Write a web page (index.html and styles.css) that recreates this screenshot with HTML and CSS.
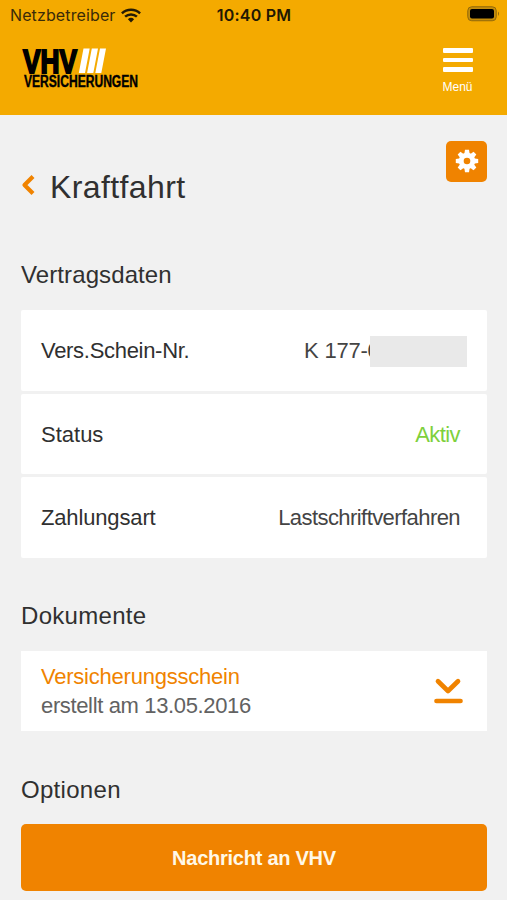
FILE: index.html
```html
<!DOCTYPE html>
<html lang="de">
<head>
<meta charset="utf-8">
<meta name="viewport" content="width=device-width, initial-scale=1">
<title>VHV Versicherungen – Kraftfahrt</title>
<link rel="stylesheet" href="styles.css">
</head>
<body>
<header class="header">
  <div class="status-bar">
    <div class="carrier"><span>Netzbetreiber</span>
      <svg width="20" height="15" viewBox="0 0 20 15" fill="none" stroke="#241b05" stroke-width="2.5"><path d="M.9 5.4a13.3 13.3 0 0 1 18.2 0"/><path d="M4.1 8.7a8.7 8.7 0 0 1 11.8 0"/><path d="M6.9 11.2a4.6 4.6 0 0 1 6.2 0L10 14.5z" fill="#241b05" stroke="none"/></svg>
    </div>
    <time class="clock">10:40 PM</time>
    <svg class="battery" width="33" height="16" viewBox="0 0 33 16"><rect x=".75" y=".75" width="28.5" height="14" rx="4" fill="#c48d0b" stroke="#92690a"/><rect x="3" y="3" width="24" height="9.5" rx="2" fill="#000"/><path d="M31 5.5q2 2.2 0 4.5z" fill="#92690a"/></svg>
  </div>
  <div class="brand-row">
    <svg class="logo" width="120" height="44" viewBox="0 0 120 44" role="img" aria-label="VHV Versicherungen">
      <text class="logo-main" x="2" y="25.5" textLength="54" lengthAdjust="spacingAndGlyphs">VHV</text>
      <path fill="#fff" d="M62.500 1.500h6.200L64 26h-6.200zM70.800 1.500h6.200L72.300 26h-6.200zM79 1.500h6L80.300 26h-6z"/>
      <text class="logo-sub" x="3" y="40.300" textLength="114" lengthAdjust="spacingAndGlyphs">VERSICHERUNGEN</text>
    </svg>
    <button class="menu"><span class="bars"><i></i><i></i><i></i></span><span>Menü</span></button>
  </div>
</header>
<main class="content">
  <div class="title-row">
    <svg width="14" height="22" viewBox="0 0 14 22" fill="none" stroke="#f08300" stroke-width="4.200" stroke-linecap="butt" stroke-linejoin="round"><path d="M12 2.500 3.500 11 12 19.500"/></svg>
    <h1>Kraftfahrt</h1>
    <button class="settings" aria-label="Einstellungen">
      <svg width="24" height="24" viewBox="-12 -12 24 24"><g fill="#fff"><path id="tooth" d="M-2-11.200h4l.8 5h-5.600z"/><use href="#tooth" transform="rotate(45)"/><use href="#tooth" transform="rotate(90)"/><use href="#tooth" transform="rotate(135)"/><use href="#tooth" transform="rotate(180)"/><use href="#tooth" transform="rotate(225)"/><use href="#tooth" transform="rotate(270)"/><use href="#tooth" transform="rotate(315)"/><circle r="8.200"/></g><circle r="3.300" fill="#f08300"/></svg>
    </button>
  </div>
  <h2>Vertragsdaten</h2>
  <div class="data-list">
    <div class="card"><span class="label number-label">Vers.Schein-Nr.</span><span class="number"><span class="number-text">K 177-0</span><span class="mask"></span></span></div>
    <div class="card"><span class="label">Status</span><span class="value active">Aktiv</span></div>
    <div class="card"><span class="label payment-label">Zahlungsart</span><span class="value">Lastschriftverfahren</span></div>
  </div>
  <h2 class="documents">Dokumente</h2>
  <div class="card document">
    <div><div class="doc-title">Versicherungsschein</div><div class="doc-date">erstellt am 13.05.2016</div></div>
    <svg width="30" height="28" viewBox="0 0 30 28" fill="none" stroke="#f08300" stroke-width="4.700" stroke-linecap="round" stroke-linejoin="round"><path d="M5 4.200 15 14 25 4.200M3.500 24h24"/></svg>
  </div>
  <h2 class="options">Optionen</h2>
  <button class="message">Nachricht an VHV</button>
</main>
</body>
</html>
```

FILE: styles.css
```css
* { box-sizing: border-box; }
body { margin: 0; height: 900px; overflow: hidden; background: #f1f1f1; color: #303030; font-family: "Liberation Sans", Arial, sans-serif; }
button { font: inherit; border: 0; padding: 0; color: #fff; }
svg { display: block; flex: none; }
.header { height: 115px; background: #f4aa00; }
.status-bar { display: grid; grid-template-columns: 1fr auto 1fr; align-items: center; height: 30px; padding: 0 7px 0 10px; font-family: Inter, sans-serif; font-size: 16px; color: #3a2b08; }
.carrier { display: flex; align-items: center; gap: 6px; letter-spacing: .12px; }
.clock { margin-left: -2px; font-weight: 600; color: #211803; letter-spacing: .25px; }
.battery { justify-self: end; margin-top: -2px; }
.brand-row { display: flex; justify-content: space-between; padding: 17px 34px 0 21px; }
.logo { overflow: visible; }
.logo-main { font-family: "Liberation Sans", sans-serif; font-size: 34px; font-weight: 700; stroke: #000; stroke-width: 2px; }
.logo-sub { font-family: "Liberation Sans", sans-serif; font-size: 16px; font-weight: 700; stroke: #000; stroke-width: .4px; }
.menu { display: flex; flex-direction: column; align-items: center; width: 31px; height: 48px; background: none; font-size: 12px; line-height: 14px; }
.bars { display: grid; gap: 5px; width: 30px; padding-top: 1px; margin-bottom: 8px; }
.bars i { height: 4.500px; border-radius: 1px; background: #fff; }
.content { padding: 26px 20px 0 21px; }
.title-row { display: flex; height: 90px; padding-top: 33px; }
h1, h2 { margin: 0; font-weight: 400; }
h1 { margin-left: 15px; font-size: 32px; line-height: 26px; letter-spacing: .4px; }
.settings { display: grid; place-items: center; width: 41px; height: 41px; margin: -33px 0 0 auto; border-radius: 5px; background: #f08300; }
.settings svg { margin-top: -2px; }
h2 { height: 30px; margin-top: 28px; font-size: 24px; line-height: 31px; letter-spacing: .1px; }
.data-list { display: grid; gap: 3px; margin-top: 21px; }
.card { display: flex; align-items: center; justify-content: space-between; height: 80.600px; padding: 2px 27px 0 20px; background: #fff; font-size: 22px; border-radius: 2px; }
.label { letter-spacing: 0; }
.number-label { letter-spacing: -.3px; }
.payment-label { letter-spacing: -.15px; }
.value { color: #444; letter-spacing: -.57px; }
.active { color: #7ed03c; }
.number { display: flex; align-items: center; margin-right: -7px; color: #444; }
.number-text { width: 66px; overflow: hidden; white-space: nowrap; letter-spacing: -.2px; }
.mask { width: 97px; height: 31px; background: #e9e9e9; }
.documents { margin-top: 43px; line-height: 29px; letter-spacing: .3px; }
.document { margin-top: 20px; padding: 0 24px 0 20px; border-radius: 0; line-height: 29px; }
.doc-title { color: #f08300; letter-spacing: -.23px; }
.doc-date { color: #626262; letter-spacing: -.36px; }
.options { margin-top: 43px; letter-spacing: .3px; }
.message { display: block; width: 100%; height: 67px; padding-top: 2px; margin-top: 20px; border-radius: 5px; background: #f08300; color: #fff8e8; font-size: 20px; font-weight: 700; letter-spacing: -.25px; }
```
